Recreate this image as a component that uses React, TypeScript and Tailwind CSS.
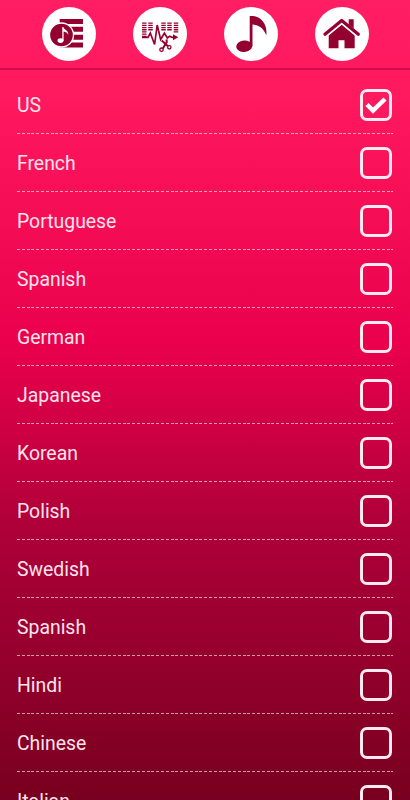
import React from "react";

const languages = [
  "US",
  "French",
  "Portuguese",
  "Spanish",
  "German",
  "Japanese",
  "Korean",
  "Polish",
  "Swedish",
  "Spanish",
  "Hindi",
  "Chinese",
  "Italian",
];

function PlaylistIcon() {
  return (
    <svg viewBox="0 0 54 54" className="w-full h-full">
      <path
        fill="#94002f"
        d="M17.700 12H41v5H17.700zM17.700 19.800H41v5H17.700zM17.700 27.700H41v5H17.700zM17.700 35.500H41v5H17.700z"
      />
      <circle cx="19.500" cy="28" r="12" fill="#94002f" stroke="#fff" strokeWidth="1.300" />
      <ellipse cx="18.500" cy="33.600" rx="3" ry="2.300" fill="#fff" />
      <path
        d="M20.300 20h1.100c.4 2.700 5.400 3.200 4.800 7.700-.6-1.900-2.500-3-4.600-3.300v9.400h-1.300z"
        fill="#fff"
      />
    </svg>
  );
}

function CutterIcon() {
  return (
    <svg viewBox="0 0 54 54" className="w-full h-full" fill="none" stroke="#94002f">
      <g strokeWidth="4.500" strokeDasharray="1.300 .9">
        <path d="M11.300 15.500v15.200" />
        <path d="M17.500 15.500v8" />
        <path d="M30.500 15.500v8M36.500 15.500v8" />
        <path d="M43 15.500v10.500" />
      </g>
      <path
        d="M9 30.300h6l2.300-4.300 4.300 11.500L24.200 18l3.400 14.500 3.800-6.300 3 4.800 2.300-1.800 2.300 1.100h3"
        strokeWidth="1.700"
      />
      <path d="M40 27.300l5.300 3-5.300 3z" fill="#94002f" stroke="none" />
      <path d="M28.700 33.500l6.300 5.700M33.500 32.300l.3 2.700-4 6.500" strokeWidth="2" />
      <circle cx="28.500" cy="42.700" r="1.700" strokeWidth="1.300" />
      <circle cx="36.300" cy="40.300" r="1.700" strokeWidth="1.300" />
    </svg>
  );
}

function NoteIcon() {
  return (
    <svg viewBox="0 0 54 54" className="w-full h-full" fill="#94002f">
      <ellipse cx="20.200" cy="39.300" rx="8" ry="5.700" transform="rotate(-5 20.200 39.300)" />
      <path d="M25.700 9h3.500C37 10 43.700 17 42.300 28.300 39.500 21 35 18 28.500 17.500V39.500h-2.800z" />
    </svg>
  );
}

function HomeIcon() {
  return (
    <svg viewBox="0 0 54 54" className="w-full h-full" fill="#94002f">
      <path d="M33.700 12.300h5v12l-5-4.500z" />
      <path d="M26.700 17.700L39.700 28.500v12.800H29.500v-8h-6v8H13.700V28.500z" />
      <path d="M10 28.200L26.700 14.600 43.300 28.200" fill="none" stroke="#fff" strokeWidth="4.500" />
      <path
        d="M10 27.300L26.700 13.500 43.300 27.300"
        fill="none"
        stroke="#94002f"
        strokeWidth="3.300"
        strokeLinecap="round"
        strokeLinejoin="round"
      />
    </svg>
  );
}

const actions = [
  { label: "Playlist", Icon: PlaylistIcon },
  { label: "Cutter", Icon: CutterIcon },
  { label: "Ringtones", Icon: NoteIcon },
  { label: "Home", Icon: HomeIcon },
];

export default function App() {
  const [selected, setSelected] = React.useState(0);

  return (
    <div className="h-screen w-full overflow-hidden flex flex-col bg-[linear-gradient(180deg,#ff1d63_0%,#ff195f_12%,#ea004c_43%,#b0003a_65%,#78001f_100%)] font-['Roboto',sans-serif] text-white">
      {/* Top actions */}
      <header className="h-[70px] shrink-0 flex justify-center gap-[37px] pt-[7px] pl-px border-b-2 border-[#d50a4c]">
        {actions.map(({ label, Icon }) => (
          <button
            key={label}
            aria-label={label}
            className="w-[54px] h-[54px] shrink-0 rounded-full bg-white overflow-hidden"
          >
            <Icon />
          </button>
        ))}
      </header>

      {/* Language list */}
      <ul className="px-[17px] pt-[6px]">
        {languages.map((name, i) => (
          <li key={i} className="h-[58px] flex flex-col">
            <button
              onClick={() => setSelected(i)}
              className="h-[57px] w-full flex items-center justify-between text-left pr-px"
            >
              <span className="text-[19.4px] leading-6 pt-[2px] text-[#ffe3ec]">{name}</span>
              <span className="w-8 h-8 rounded-[7px] border-3 border-[#ffeaf1] flex items-center justify-center">
                {selected === i && (
                  <svg viewBox="0 0 26 26" className="w-[26px] h-[26px] shrink-0">
                    <path d="M4 12.500l6 6L22 7" fill="none" stroke="#fff" strokeWidth="4.500" />
                  </svg>
                )}
              </span>
            </button>
            <div className="h-px bg-[repeating-linear-gradient(90deg,#ffffff99_0_3px,transparent_3px_4.8px)]" />
          </li>
        ))}
      </ul>
    </div>
  );
}
